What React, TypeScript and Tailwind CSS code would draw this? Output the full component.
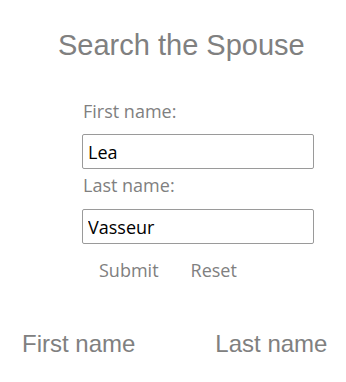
export default function App() {
  return (
    <div className="min-h-[382px] w-[346px] bg-white text-[#808080]">
      <h1 className="ml-[58px] pt-[31px] text-[29px] leading-none font-normal font-['Liberation_Sans',Arial,sans-serif]">
        Search the Spouse
      </h1>

      <form className="ml-[82px] mt-[39px] flex w-[232px] flex-col font-['Open_Sans',sans-serif] text-[18px] leading-[24px]">
        <label htmlFor="first" className="pl-[1px]">
          First name:
        </label>
        <input
          id="first"
          defaultValue="Lea"
          className="mt-[11px] h-[35px] w-[232px] rounded-[2px] border border-[#9a9a9a] px-[5px] text-black outline-none"
        />
        <label htmlFor="last" className="mt-[4px] pl-[1px]">
          Last name:
        </label>
        <input
          id="last"
          defaultValue="Vasseur"
          className="mt-[12px] h-[35px] w-[232px] rounded-[2px] border border-[#9a9a9a] px-[5px] text-black outline-none"
        />
        <div className="mt-[14px] ml-[17px] flex gap-[32px]">
          <button type="button">Submit</button>
          <button type="button">Reset</button>
        </div>
      </form>

      <table className="mt-[50px] font-['Liberation_Sans',Arial,sans-serif] text-[24px] leading-none">
        <thead>
          <tr>
            <th className="pl-[22px] text-left font-normal">First name</th>
            <th className="pl-[80px] text-left font-normal">Last name</th>
          </tr>
        </thead>
      </table>
    </div>
  );
}
